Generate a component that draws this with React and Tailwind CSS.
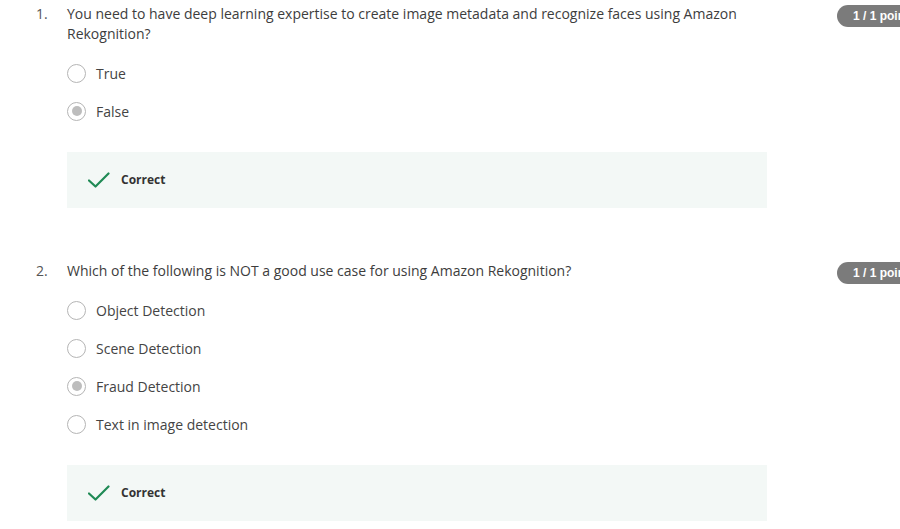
import React from 'react';

const questions = [
  {
    n: '1.',
    text: 'You need to have deep learning expertise to create image metadata and recognize faces using Amazon Rekognition?',
    options: ['True', 'False'],
    selected: 1,
  },
  {
    n: '2.',
    text: 'Which of the following is NOT a good use case for using Amazon Rekognition?',
    options: ['Object Detection', 'Scene Detection', 'Fraud Detection', 'Text in image detection'],
    selected: 2,
  },
];

function Radio({ checked }) {
  return (
    <span className="w-[19px] h-[19px] rounded-full border-[1.5px] border-[#b5b5b5] bg-white flex items-center justify-center shrink-0">
      {checked && <span className="w-[10px] h-[10px] rounded-full bg-[#bdbdbd]" />}
    </span>
  );
}

function Feedback() {
  return (
    <div className="mt-[22px] h-[56px] bg-[#f3f8f6] flex items-center pl-[21px]">
      <svg width="22" height="16" viewBox="0 0 22 16" fill="none" className="shrink-0">
        <path d="M1 8.5 L7.5 14.5 L20.5 1.5" stroke="#1f8a55" strokeWidth="2.2" strokeLinecap="round" strokeLinejoin="round" />
      </svg>
      <span className="ml-[11px] text-[12px] font-bold text-[#333]">Correct</span>
    </div>
  );
}

export default function App() {
  return (
    <div className="w-[900px] h-[529px] overflow-hidden bg-white font-['Open_Sans',sans-serif] text-[#3d3d3d]">
      {questions.map((q, qi) => (
        <div key={qi} className={`flex pl-[36px] ${qi === 0 ? 'pt-[4px]' : 'pt-[53px]'}`}>
          <div className="w-[31px] shrink-0 text-[14px] leading-[20px] text-[#555]">{q.n}</div>
          <div className="w-[700px] shrink-0">
            <p className="text-[14px] leading-[20px] pr-[20px]">{q.text}</p>
            <div className="mt-[10px]">
              {q.options.map((o, oi) => (
                <label key={oi} className="h-[38px] flex items-center">
                  <Radio checked={oi === q.selected} />
                  <span className="ml-[10px] text-[14px] text-[#444]">{o}</span>
                </label>
              ))}
            </div>
            <Feedback />
          </div>
          <div className="ml-[70px] mt-[1px] shrink-0 h-[22px] w-[90px] rounded-full bg-[#7b7b7b] pl-[16px] flex items-center font-['Liberation_Sans',Arial,sans-serif] text-[12px] font-bold text-white whitespace-nowrap">
            1 / 1 point
          </div>
        </div>
      ))}
    </div>
  );
}
